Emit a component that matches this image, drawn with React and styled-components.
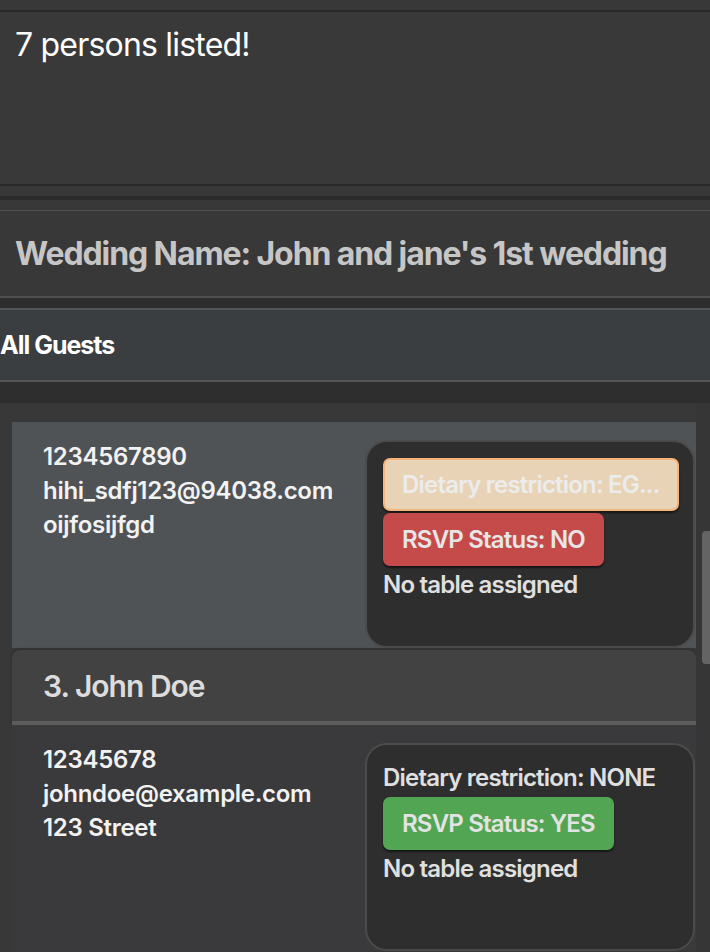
import React from 'react'
import styled, {createGlobalStyle} from 'styled-components'

const GlobalStyle = createGlobalStyle`
  html, body {
    margin: 0;
    padding: 0;
    background: #383838;
  }
  body {
    font-family: Inter, "Noto Sans", "Liberation Sans", sans-serif;
  }
`

const Window = styled.div`
  width: 710px;
  height: 952px;
  overflow: hidden;
  display: flex;
  flex-direction: column;
  background: #383838;
`

const ResultArea = styled.div`
  padding: 10px 0;
  border-bottom: 4px solid #2b2b2b;
`

const ResultBox = styled.div`
  height: 176px;
  box-sizing: border-box;
  border-top: 2px solid #2a2a2a;
  border-bottom: 2px solid #2a2a2a;
  padding: 13px 15px;
  background: #393939;
  color: #ffffff;
  font-size: 32px;
  font-weight: 400;
  letter-spacing: -0.8px;
`

const WeddingArea = styled.div`
  padding-top: 10px;
`

const WeddingBox = styled.div`
  height: 88px;
  box-sizing: border-box;
  border-top: 1px solid #505050;
  border-bottom: 2px solid #505050;
  display: flex;
  align-items: center;
  padding: 0 15px;
  color: #c6c6c6;
  font-size: 32px;
  font-weight: 700;
  letter-spacing: -1.1px;
`

const GuestsPanel = styled.div`
  background: #2e2e2e;
  padding: 10px 0 21px;
`

const GuestsHeader = styled.div`
  height: 74px;
  box-sizing: border-box;
  border-top: 2px solid #555555;
  border-bottom: 2px solid #555555;
  background: #3b3e41;
  display: flex;
  align-items: center;
  padding-left: 0;
  color: #ffffff;
  font-size: 25px;
  font-weight: 700;
  letter-spacing: -1px;
`

const ListView = styled.div`
  flex: 1;
  display: flex;
  min-height: 0;
  background: #383838;
`

const Cells = styled.div`
  flex: 1;
  padding: 19px 0 0 12px;
  display: flex;
  flex-direction: column;
  gap: 2px;
`

const ScrollTrack = styled.div`
  width: 14px;
  background: #363636;
  display: flex;
  justify-content: flex-end;
`

const ScrollThumb = styled.div`
  margin-top: ${p => p.$offset}px;
  width: 8px;
  height: 133px;
  border-radius: 4px 0 0 4px;
  background: #646464;
`

const Card = styled.div`
  display: flex;
  flex-direction: column;
`

const CardHeader = styled.div`
  height: 75px;
  box-sizing: border-box;
  border-radius: 8px 8px 0 0;
  background: #424242;
  border-bottom: 4px solid #5c5c5c;
  display: flex;
  align-items: center;
  padding: 0 31px;
  color: #dcdcdc;
  font-size: 30px;
  font-weight: 600;
  letter-spacing: -1px;
  box-shadow: 0 -1px 3px rgba(0, 0, 0, 0.25);
`

const CardBody = styled.div`
  height: 226px;
  box-sizing: border-box;
  display: flex;
  padding-top: 18px;
  background: ${p => (p.$selected ? '#4f5356' : '#3a3a3c')};
`

const Details = styled.div`
  flex: 1;
  padding-left: 31px;
  display: flex;
  flex-direction: column;
`

const Line = styled.div`
  height: 34px;
  line-height: 34px;
  color: #f2f2f2;
  font-size: 24px;
  font-weight: 600;
  letter-spacing: -0.3px;
  white-space: nowrap;
`

const InfoBox = styled.div`
  width: 330px;
  height: 208px;
  box-sizing: border-box;
  margin-right: 1px;
  border: 2px solid #4b4b4b;
  border-radius: 22px;
  background: #2e2e2e;
  padding: 16px 16px 0;
  display: flex;
  flex-direction: column;
  align-items: flex-start;
  gap: 2px;
`

const tagColours = {
  diet: {bg: '#e8d3b7', border: '#f5b47b', fg: '#ececec'},
  no: {bg: '#c54a4a', border: '#c54a4a', fg: '#e6e6e6'},
  yes: {bg: '#52a553', border: '#52a553', fg: '#e3e3e3'},
}

const Tag = styled.div`
  height: 53px;
  box-sizing: border-box;
  line-height: 49px;
  padding: 0 17px;
  border: 2px solid ${p => tagColours[p.$kind].border};
  border-radius: 7px;
  background: ${p => tagColours[p.$kind].bg};
  color: ${p => tagColours[p.$kind].fg};
  font-size: 24px;
  font-weight: 600;
  letter-spacing: -0.8px;
  white-space: nowrap;
  box-shadow: 0 2px 2px rgba(0, 0, 0, 0.55);
  ${p => p.$wide && 'align-self: stretch; margin-right: -2px;'}
`

const InfoLine = styled(Line)`
  color: #e0e0e0;
  letter-spacing: -0.8px;
`

const guests = [
  {
    id: 2,
    name: 'Jane Smith',
    phone: '1234567890',
    email: 'hihi_sdfj123@94038.com',
    address: 'oijfosijfgd',
    diet: 'Dietary restriction: EG...',
    rsvp: 'NO',
    selected: true,
    cropped: true,
  },
  {
    id: 3,
    name: 'John Doe',
    phone: '12345678',
    email: 'johndoe@example.com',
    address: '123 Street',
    diet: 'Dietary restriction: NONE',
    rsvp: 'YES',
  },
]

function GuestCard({guest}) {
  const dietTagged = guest.diet !== 'Dietary restriction: NONE'
  return (
    <Card>
      {!guest.cropped && <CardHeader>{guest.id}. {guest.name}</CardHeader>}
      <CardBody $selected={guest.selected}>
        <Details>
          <Line>{guest.phone}</Line>
          <Line>{guest.email}</Line>
          <Line>{guest.address}</Line>
        </Details>
        <InfoBox>
          {dietTagged
            ? <Tag $kind="diet" $wide>{guest.diet}</Tag>
            : <InfoLine>{guest.diet}</InfoLine>}
          <Tag $kind={guest.rsvp === 'YES' ? 'yes' : 'no'}>RSVP Status: {guest.rsvp}</Tag>
          <InfoLine>No table assigned</InfoLine>
        </InfoBox>
      </CardBody>
    </Card>
  )
}

export default function App() {
  return (
    <Window>
      <GlobalStyle />
      <ResultArea>
        <ResultBox>7 persons listed!</ResultBox>
      </ResultArea>
      <WeddingArea>
        <WeddingBox>Wedding Name: John and jane's 1st wedding</WeddingBox>
      </WeddingArea>
      <GuestsPanel>
        <GuestsHeader>All Guests</GuestsHeader>
      </GuestsPanel>
      <ListView>
        <Cells>
          {guests.map(g => <GuestCard key={g.id} guest={g} />)}
        </Cells>
        <ScrollTrack>
          <ScrollThumb $offset={128} />
        </ScrollTrack>
      </ListView>
    </Window>
  )
}
